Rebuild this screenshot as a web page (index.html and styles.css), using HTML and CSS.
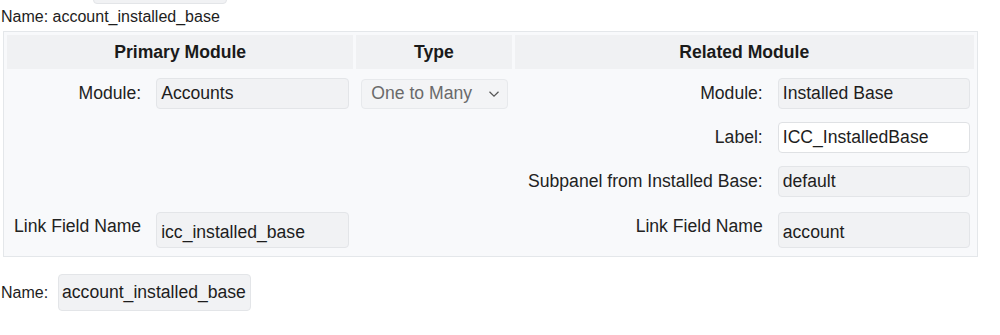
FILE: index.html
```html
<!DOCTYPE HTML>
<html>
  <head>
    <title>relationship editor</title>
    <link rel="stylesheet" href="styles.css">
  </head>
  <body>
    <div class="page">
      <div class="top-row">
        <span class="top-label">Language:</span>
        <span class="field top-field">Singularly</span>
      </div>
      <div class="name-line">Name: account_installed_base</div>

      <table class="rel">
        <colgroup>
          <col class="c-lab1"><col class="c-inp1"><col class="c-type"><col class="c-lab2"><col class="c-inp2">
        </colgroup>
        <thead>
          <tr>
            <th colspan="2">Primary Module</th>
            <th>Type</th>
            <th colspan="2">Related Module</th>
          </tr>
        </thead>
        <tbody>
          <tr class="first">
            <td class="lab">Module:</td>
            <td><div class="field">Accounts</div></td>
            <td>
              <div class="select">
                <span>One to Many</span>
                <svg width="12" height="8" viewBox="0 0 12 8"><path d="M1.5 1.8 L6 6.2 L10.5 1.8" fill="none" stroke="#555" stroke-width="1.2"/></svg>
              </div>
            </td>
            <td class="lab">Module:</td>
            <td><div class="field">Installed Base</div></td>
          </tr>
          <tr>
            <td></td><td></td><td></td>
            <td class="lab">Label:</td>
            <td><div class="field edit">ICC_InstalledBase</div></td>
          </tr>
          <tr>
            <td></td><td></td><td></td>
            <td class="lab">Subpanel from Installed Base:</td>
            <td><div class="field">default</div></td>
          </tr>
          <tr class="last">
            <td class="lab top">Link Field Name</td>
            <td><div class="field tall">icc_installed_base</div></td>
            <td></td>
            <td class="lab top">Link Field Name</td>
            <td><div class="field tall">account</div></td>
          </tr>
        </tbody>
      </table>

      <div class="bottom-row">
        <span class="bottom-label">Name:</span>
        <span class="field name-field">account_installed_base</span>
      </div>
    </div>
  </body>
</html>
```

FILE: styles.css
```css
body {
  margin: 0;
  background: #fff;
  font-family: "Liberation Sans", Arial, sans-serif;
  color: #1d1d1d;
  overflow: hidden;
}

.page { padding-left: 1px; }

/* row scrolled mostly out of view */
.top-row {
  display: flex;
  align-items: center;
  margin-top: -27px;
  height: 31px;
  font-size: 16px;
}
.top-label { width: 92px; white-space: nowrap; overflow: hidden; }
.top-field {
  width: 134px;
  height: 31px;
  background: #fff;
  font-size: 16px;
}

.name-line {
  font-size: 16px;
  margin-top: 4px;
  line-height: 18px;
}

.field {
  box-sizing: border-box;
  display: flex;
  align-items: center;
  height: 31px;
  padding: 0 4px;
  background: #f1f2f4;
  border: 1px solid #e3e5e8;
  border-radius: 4px;
  font-size: 17.6px;
  color: #1d1d1d;
  white-space: nowrap;
  overflow: hidden;
}
.field.edit { background: #fff; border-color: #dfe1e4; }
.field.tall { height: 36px; padding-top: 4px; }

table.rel {
  margin-top: 5px;
  margin-left: 2px;
  width: 975px;
  table-layout: fixed;
  border-collapse: separate;
  border-spacing: 3px;
  border: 1px solid #e4e7ea;
  background: #f8f9fb;
  font-size: 17.6px;
}
.c-lab1 { width: 141px; }
.c-inp1 { width: 202px; }
.c-type { width: 155px; }
.c-lab2 { width: 255px; }
.c-inp2 { width: 201px; }

table.rel th {
  height: 34px;
  padding: 0;
  background: #f0f1f3;
  font-weight: bold;
  color: #1a1a1a;
  text-align: center;
}

table.rel td {
  padding: 5px 4px 5px 5px;
  vertical-align: middle;
}
table.rel tr.first td { padding-top: 6px; }
table.rel tr.last td { padding-top: 7px; }

table.rel td.lab {
  text-align: right;
  padding-right: 7px;
  color: #222;
  white-space: nowrap;
}
table.rel td.lab.top { vertical-align: top; padding-top: 11px; }

.select {
  box-sizing: border-box;
  display: flex;
  align-items: center;
  justify-content: space-between;
  height: 30px;
  padding: 0 7px 0 9px;
  background: #f3f4f6;
  border: 1px solid #e7e9ec;
  border-radius: 4px;
  color: #6a6a6a;
}

.bottom-row {
  display: flex;
  align-items: center;
  margin-top: 17px;
}
.bottom-label { width: 57px; font-size: 16px; }
.name-field {
  width: 193px;
  height: 37px;
  padding: 0 3px;
}
```
